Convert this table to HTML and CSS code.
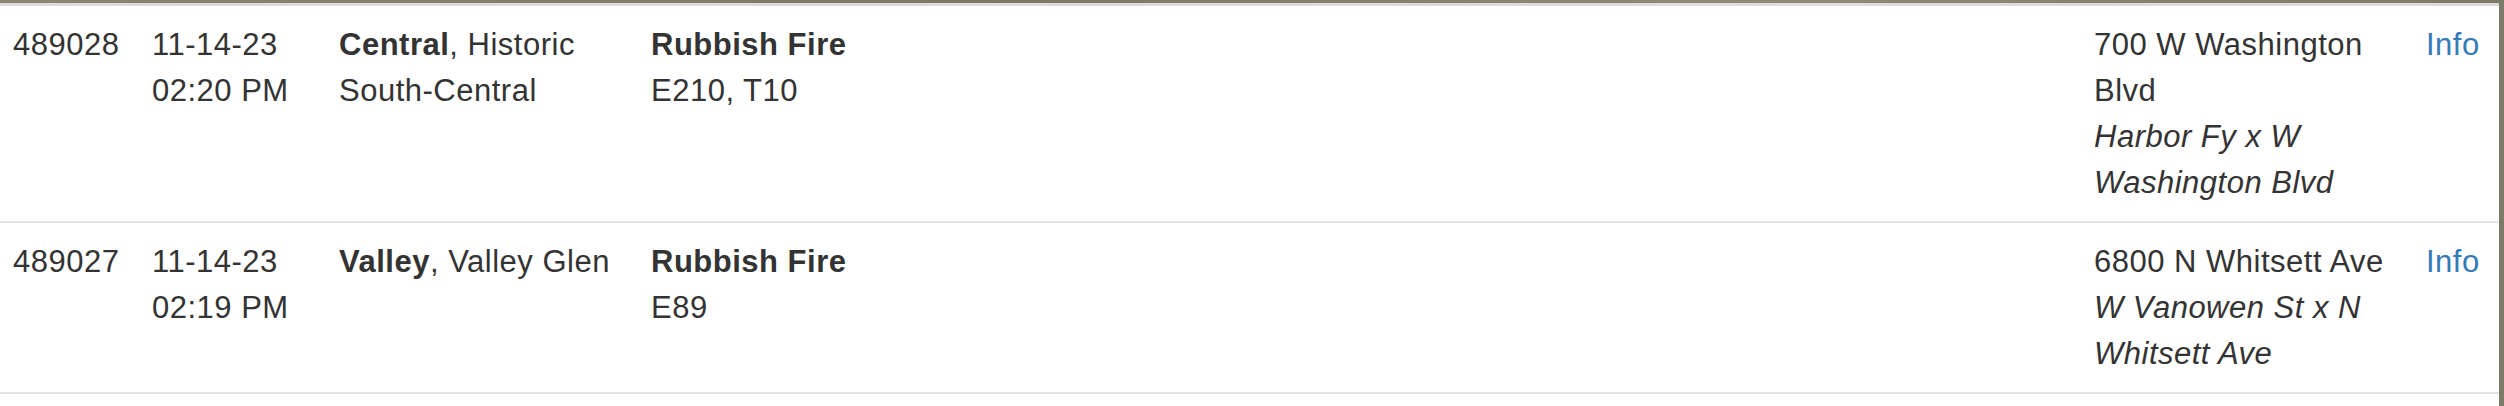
FILE: index.html
```html
<!DOCTYPE html>
<html lang="en">
<head>
<meta charset="utf-8">
<title>Incidents</title>
<link rel="stylesheet" href="styles.css">
</head>
<body>
<div class="panel">
  <div class="row">
    <div class="cell">489028</div>
    <div class="cell">11-14-23<br>02:20 PM</div>
    <div class="cell"><b>Central</b>, Historic South-Central</div>
    <div class="cell"><b>Rubbish Fire</b><br>E210, T10</div>
    <div class="cell">700 W Washington Blvd<br><i>Harbor Fy x W Washington Blvd</i></div>
    <div class="cell"><a href="#" class="info">Info</a></div>
  </div>
  <div class="row">
    <div class="cell">489027</div>
    <div class="cell">11-14-23<br>02:19 PM</div>
    <div class="cell"><b>Valley</b>, Valley Glen</div>
    <div class="cell"><b>Rubbish Fire</b><br>E89</div>
    <div class="cell">6800 N Whitsett Ave<br><i>W Vanowen St x N Whitsett Ave</i></div>
    <div class="cell"><a href="#" class="info">Info</a></div>
  </div>
</div>
</body>
</html>
```

FILE: styles.css
```css
html, body {
  margin: 0;
  padding: 0;
}
body {
  background: #858170;
  background-image: linear-gradient(90deg, #8a8672 0%, #7b7866 40%, #8f8b77 70%, #7e7a69 100%);
  padding-top: 3px;
  height: 403px;
  overflow: hidden;
  font-family: "Liberation Sans", Arial, Helvetica, sans-serif;
  font-size: 31px;
  line-height: 46px;
  letter-spacing: 0.5px;
  color: #333333;
}
.panel {
  width: 2499px;
  height: 403px;
  background: #ffffff;
  border-top: 3px solid #dcdcdc;
  box-sizing: border-box;
}
.row {
  display: grid;
  grid-template-columns: 139px 187px 312px 1443px 332px 86px;
  border-bottom: 2px solid #e3e3e3;
}
.cell {
  padding: 16px 13px 15px 13px;
}
.cell b {
  font-weight: bold;
}
.cell i {
  font-style: italic;
}
.info {
  color: #337ab7;
  text-decoration: none;
}
```
